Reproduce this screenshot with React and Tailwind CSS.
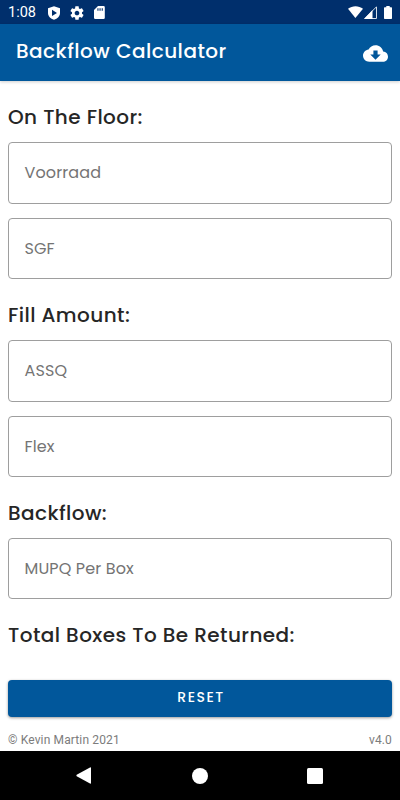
import React from "react";

function Field({ label, className }) {
  return (
    <div className="flex h-[61.5px] items-center rounded-[4px] border border-[#9e9e9e] pt-px pl-[15.5px]">
      <span className={`whitespace-nowrap text-[16px] leading-6 text-[#747474] ${className}`}>{label}</span>
    </div>
  );
}

function Heading({ children, className }) {
  return (
    <h2 className={`whitespace-nowrap text-[20px] leading-[28px] font-medium text-[#262626] ${className}`}>{children}</h2>
  );
}

function StatusBar() {
  return (
    <div className="flex h-6 items-center bg-[#002f6c] pl-2 pr-2 text-white">
      <span className="w-[40px] font-['Roboto'] text-[14.5px] leading-6 pt-[2px]">1:08</span>
      <svg className="mt-px h-[14px] w-[12px]" viewBox="0 0 12 14" fill="currentColor">
        <path fillRule="evenodd" d="M6 0.2 12 2.2V7C12 10.2 9.5 12.7 6 13.8 2.500 12.700 0 10.200 0 7V2.200ZM4 3.800V10L9 6.900Z" />
      </svg>
      <svg className="mt-px ml-[9px] h-4 w-4" viewBox="0 0 24 24" fill="currentColor">
        <path d="M19.43 12.98c.04-.32.07-.64.07-.98s-.03-.66-.07-.98l2.110-1.650c.19-.15.24-.42.12-.64l-2-3.460c-.12-.22-.39-.3-.61-.22l-2.490 1c-.52-.4-1.080-.73-1.690-.98l-.38-2.650C14.460 2.180 14.250 2 14 2h-4c-.25 0-.46.18-.49.42l-.38 2.650c-.61.25-1.170.59-1.690.98l-2.490-1c-.23-.09-.49 0-.61.22l-2 3.460c-.13.22-.07.49.12.64l2.110 1.650c-.04.32-.07.65-.07.98s.03.66.07.98l-2.110 1.650c-.19.15-.24.42-.12.64l2 3.460c.12.22.39.3.61.22l2.490-1c.52.4 1.080.73 1.690.98l.38 2.650c.03.24.24.42.49.42h4c.25 0 .46-.18.49-.42l.38-2.650c.61-.25 1.170-.59 1.690-.98l2.490 1c.23.09.49 0 .61-.22l2-3.460c.12-.22.07-.49-.12-.64l-2.110-1.650zM12 15.500c-1.930 0-3.500-1.570-3.500-3.500s1.570-3.500 3.500-3.500 3.500 1.570 3.500 3.500-1.570 3.500-3.500 3.500z" />
      </svg>
      <svg className="mt-px ml-[9px] h-[13px] w-[11px]" viewBox="0 0 11 13" fill="currentColor">
        <path fillRule="evenodd" d="M4 0H9.500A1.300 1.300 0 0 1 10.800 1.300V11.700A1.300 1.300 0 0 1 9.500 13H1.300A1.300 1.300 0 0 1 0 11.700V4ZM3.400 2.300V4.700H4.500V2.300ZM5.500 2.300V4.700H6.600V2.300ZM7.700 2.300V4.700H8.800V2.300Z" />
      </svg>
      <div className="ml-auto flex items-center">
        <svg className="h-3 w-[15px]" viewBox="0 0 15 12" fill="currentColor">
          <path d="M7.400 12 0 2.700C4.300-.7 10.700-.7 15 2.700Z" />
        </svg>
        <svg className="ml-[1.500px] h-[13px] w-[13px]" viewBox="0 0 13 13">
          <path d="M12.500 0.800V12.500H0.800Z" fill="none" stroke="#d5dde7" strokeWidth="1" />
          <path d="M8.500 4V13H0Z" fill="#fff" />
        </svg>
        <svg className="ml-[7px] h-[13px] w-2" viewBox="0 0 8 13" fill="currentColor">
          <path d="M2.300 0H5.700V1.300H7.300Q8 1.300 8 2V12.300Q8 13 7.300 13H.7Q0 13 0 12.300V2Q0 1.300.7 1.300H2.300Z" />
        </svg>
      </div>
    </div>
  );
}

export default function App() {
  return (
    <div className="flex h-[800px] w-[400px] flex-col overflow-hidden bg-white font-['Poppins','Inter',sans-serif]">
      <StatusBar />
      <header className="flex h-[57px] shrink-0 items-center justify-between bg-[#01579b] pl-4 pr-3 text-white shadow-[0_1px_3px_rgba(0,0,0,0.2)]">
        <h1 className="whitespace-nowrap pb-[4px] text-[20px] leading-7 font-medium tracking-[0.48px]">Backflow Calculator</h1>
        <svg className="mt-px h-[25px] w-[25px]" viewBox="0 0 24 24" fill="currentColor">
          <path d="M19.350 10.040C18.670 6.590 15.640 4 12 4 9.110 4 6.600 5.640 5.350 8.040 2.340 8.360 0 10.910 0 14c0 3.310 2.690 6 6 6h13c2.760 0 5-2.240 5-5 0-2.640-2.050-4.780-4.650-4.960zM17 13l-5 5-5-5h3V9h4v4h3z" />
        </svg>
      </header>
      <main className="flex h-[670px] shrink-0 flex-col px-2 pt-[22px]">
        <section className="flex h-[198px] flex-col">
          <Heading className="mb-[11px] tracking-[0.430px]">On The Floor:</Heading>
          <div className="flex flex-col gap-[14px]">
            <Field label="Voorraad" className="tracking-[0.120px]" />
            <Field label="SGF" className="tracking-[0.120px]" />
          </div>
        </section>
        <section className="flex h-[197.5px] flex-col">
          <Heading className="mb-[11px] tracking-[0.430px]">Fill Amount:</Heading>
          <div className="flex flex-col gap-[14px]">
            <Field label="ASSQ" className="tracking-[0.120px]" />
            <Field label="Flex" className="tracking-[0.120px]" />
          </div>
        </section>
        <section className="flex h-[122.500px] flex-col">
          <Heading className="mb-[11px] tracking-[0.430px]">Backflow:</Heading>
          <Field label="MUPQ Per Box" className="tracking-[0.120px]" />
        </section>
        <Heading className="tracking-[0.430px]">Total Boxes To Be Returned:</Heading>
        <button className="mt-[31px] flex h-[37px] shrink-0 items-center justify-center rounded-[4px] bg-[#01579b] text-[14px] leading-5 font-medium tracking-[1.500px] text-white shadow-[0_1px_3px_rgba(0,0,0,0.4)]">
          <span className="pb-[3px] pl-[2px]">RESET</span>
        </button>
        <footer className="mt-[14px] flex justify-between font-['Roboto'] text-[12px] leading-[18px] text-[#7c7c7c]">
          <span className="tracking-[0.140px]">© Kevin Martin 2021</span>
          <span className="tracking-[0.140px]">v4.0</span>
        </footer>
      </main>
      <nav className="flex h-[49px] shrink-0 items-center bg-black pl-[76px]">
        <svg className="h-[17px] w-[15px]" viewBox="0 0 15 17" fill="#fff">
          <path d="M14 .4Q15 0 15 1V16Q15 17 14 16.600L.7 9.200Q0 8.500.7 7.800Z" />
        </svg>
        <div className="ml-[101px] h-4 w-4 rounded-full bg-white" />
        <div className="ml-[99px] h-4 w-4 rounded-[1.500px] bg-white" />
      </nav>
    </div>
  );
}
